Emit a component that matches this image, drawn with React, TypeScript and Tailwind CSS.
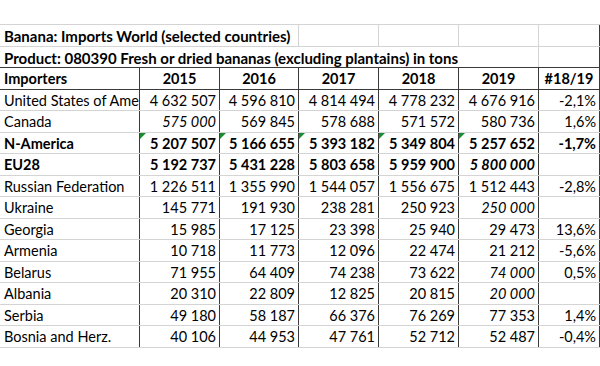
import React from 'react';

interface ImportRow {
  name: string;
  values: string[];
  change: string;
  bold?: boolean;
  italic?: number[];
  flagged?: boolean;
}

const rows: ImportRow[] = [
  { name: 'United States of America', values: ['4 632 507', '4 596 810', '4 814 494', '4 778 232', '4 676 916'], change: '-2,1%' },
  { name: 'Canada', values: ['575 000', '569 845', '578 688', '571 572', '580 736'], change: '1,6%', italic: [0] },
  { name: 'N-America', values: ['5 207 507', '5 166 655', '5 393 182', '5 349 804', '5 257 652'], change: '-1,7%', bold: true, flagged: true },
  { name: 'EU28', values: ['5 192 737', '5 431 228', '5 803 658', '5 959 900', '5 800 000'], change: '', bold: true, italic: [4] },
  { name: 'Russian Federation', values: ['1 226 511', '1 355 990', '1 544 057', '1 556 675', '1 512 443'], change: '-2,8%' },
  { name: 'Ukraine', values: ['145 771', '191 930', '238 281', '250 923', '250 000'], change: '', italic: [4] },
  { name: 'Georgia', values: ['15 985', '17 125', '23 398', '25 940', '29 473'], change: '13,6%' },
  { name: 'Armenia', values: ['10 718', '11 773', '12 096', '22 474', '21 212'], change: '-5,6%' },
  { name: 'Belarus', values: ['71 955', '64 409', '74 238', '73 622', '74 000'], change: '0,5%', italic: [4] },
  { name: 'Albania', values: ['20 310', '22 809', '12 825', '20 815', '20 000'], change: '', italic: [4] },
  { name: 'Serbia', values: ['49 180', '58 187', '66 376', '76 269', '77 353'], change: '1,4%' },
  { name: 'Bosnia and Herz.', values: ['40 106', '44 953', '47 761', '52 712', '52 487'], change: '-0,4%' },
];

const years = ['2015', '2016', '2017', '2018', '2019'];
const yearWidths = ['w-[80px]', 'w-[79px]', 'w-[80px]', 'w-[80px]', 'w-[80px]'];

function GreenTick() {
  return (
    <svg className="absolute left-0 top-0" width="6" height="6" viewBox="0 0 6 6">
      <polygon points="0,0 6,0 0,6" fill="#1a8a2e" />
    </svg>
  );
}

export default function App() {
  return (
    <div
      className="w-[600px] h-[366px] bg-white text-black overflow-hidden pt-[24px] text-[14.5px]"
      style={{ fontFamily: 'Lato, "Open Sans", sans-serif' }}
    >
      <div className="border-t border-[#d4d4d4]">
        {/* title rows */}
        <div className="flex h-[21.5px] border-b border-[#d4d4d4] text-[15px]">
          <div className="w-[299px] shrink-0 border-r border-[#d4d4d4] pl-[4px] pt-[2px] font-bold whitespace-nowrap flex items-center">
            Banana: Imports World (selected countries)
          </div>
          <div className="w-[80px] shrink-0 border-r border-[#d4d4d4]" />
          <div className="w-[80px] shrink-0 border-r border-[#d4d4d4]" />
          <div className="w-[80px] shrink-0 border-r border-[#d4d4d4]" />
          <div className="w-[61px] shrink-0 border-r border-[#3a3a3a]" />
        </div>
        <div className="flex h-[21.5px] border-b border-[#3a3a3a] text-[15px]">
          <div className="w-[539px] shrink-0 border-r border-[#d4d4d4] pl-[4px] pt-[2px] font-bold whitespace-nowrap flex items-center">
            Product: 080390 Fresh or dried bananas (excluding plantains) in tons
          </div>
          <div className="w-[61px] shrink-0 border-r border-[#3a3a3a]" />
        </div>

        {/* header */}
        <div className="flex h-[21.5px] border-b border-[#3a3a3a] font-bold">
          <div className="w-[140px] shrink-0 border-r border-[#3a3a3a] pl-[4px] pt-[2px] flex items-center">Importers</div>
          {years.map((y, i) => (
            <div key={y} className={`${yearWidths[i]} shrink-0 border-r border-[#3a3a3a] pt-[2px] flex items-center justify-center`}>
              {y}
            </div>
          ))}
          <div className="w-[61px] shrink-0 border-r border-[#3a3a3a] pt-[2px] flex items-center justify-center">#18/19</div>
        </div>

        {/* data */}
        {rows.map((row) => (
          <div
            key={row.name}
            className={`flex h-[21.5px] border-b border-[#d4d4d4] ${row.bold ? 'font-bold' : ''}`}
          >
            <div className="w-[140px] shrink-0 border-r border-[#3a3a3a] pl-[4px] pt-[2px] flex items-center overflow-hidden whitespace-nowrap">
              {row.name}
            </div>
            {row.values.map((v, i) => (
              <div
                key={i}
                className={`${yearWidths[i]} shrink-0 relative border-r border-[#3a3a3a] pr-[3px] pt-[2px] flex items-center justify-end whitespace-nowrap ${
                  row.italic?.includes(i) ? 'italic' : ''
                }`}
              >
                {row.flagged && <GreenTick />}
                {v}
              </div>
            ))}
            <div className="w-[61px] shrink-0 border-r border-[#3a3a3a] pr-[3px] pt-[2px] flex items-center justify-end">
              {row.change}
            </div>
          </div>
        ))}
      </div>
    </div>
  );
}
